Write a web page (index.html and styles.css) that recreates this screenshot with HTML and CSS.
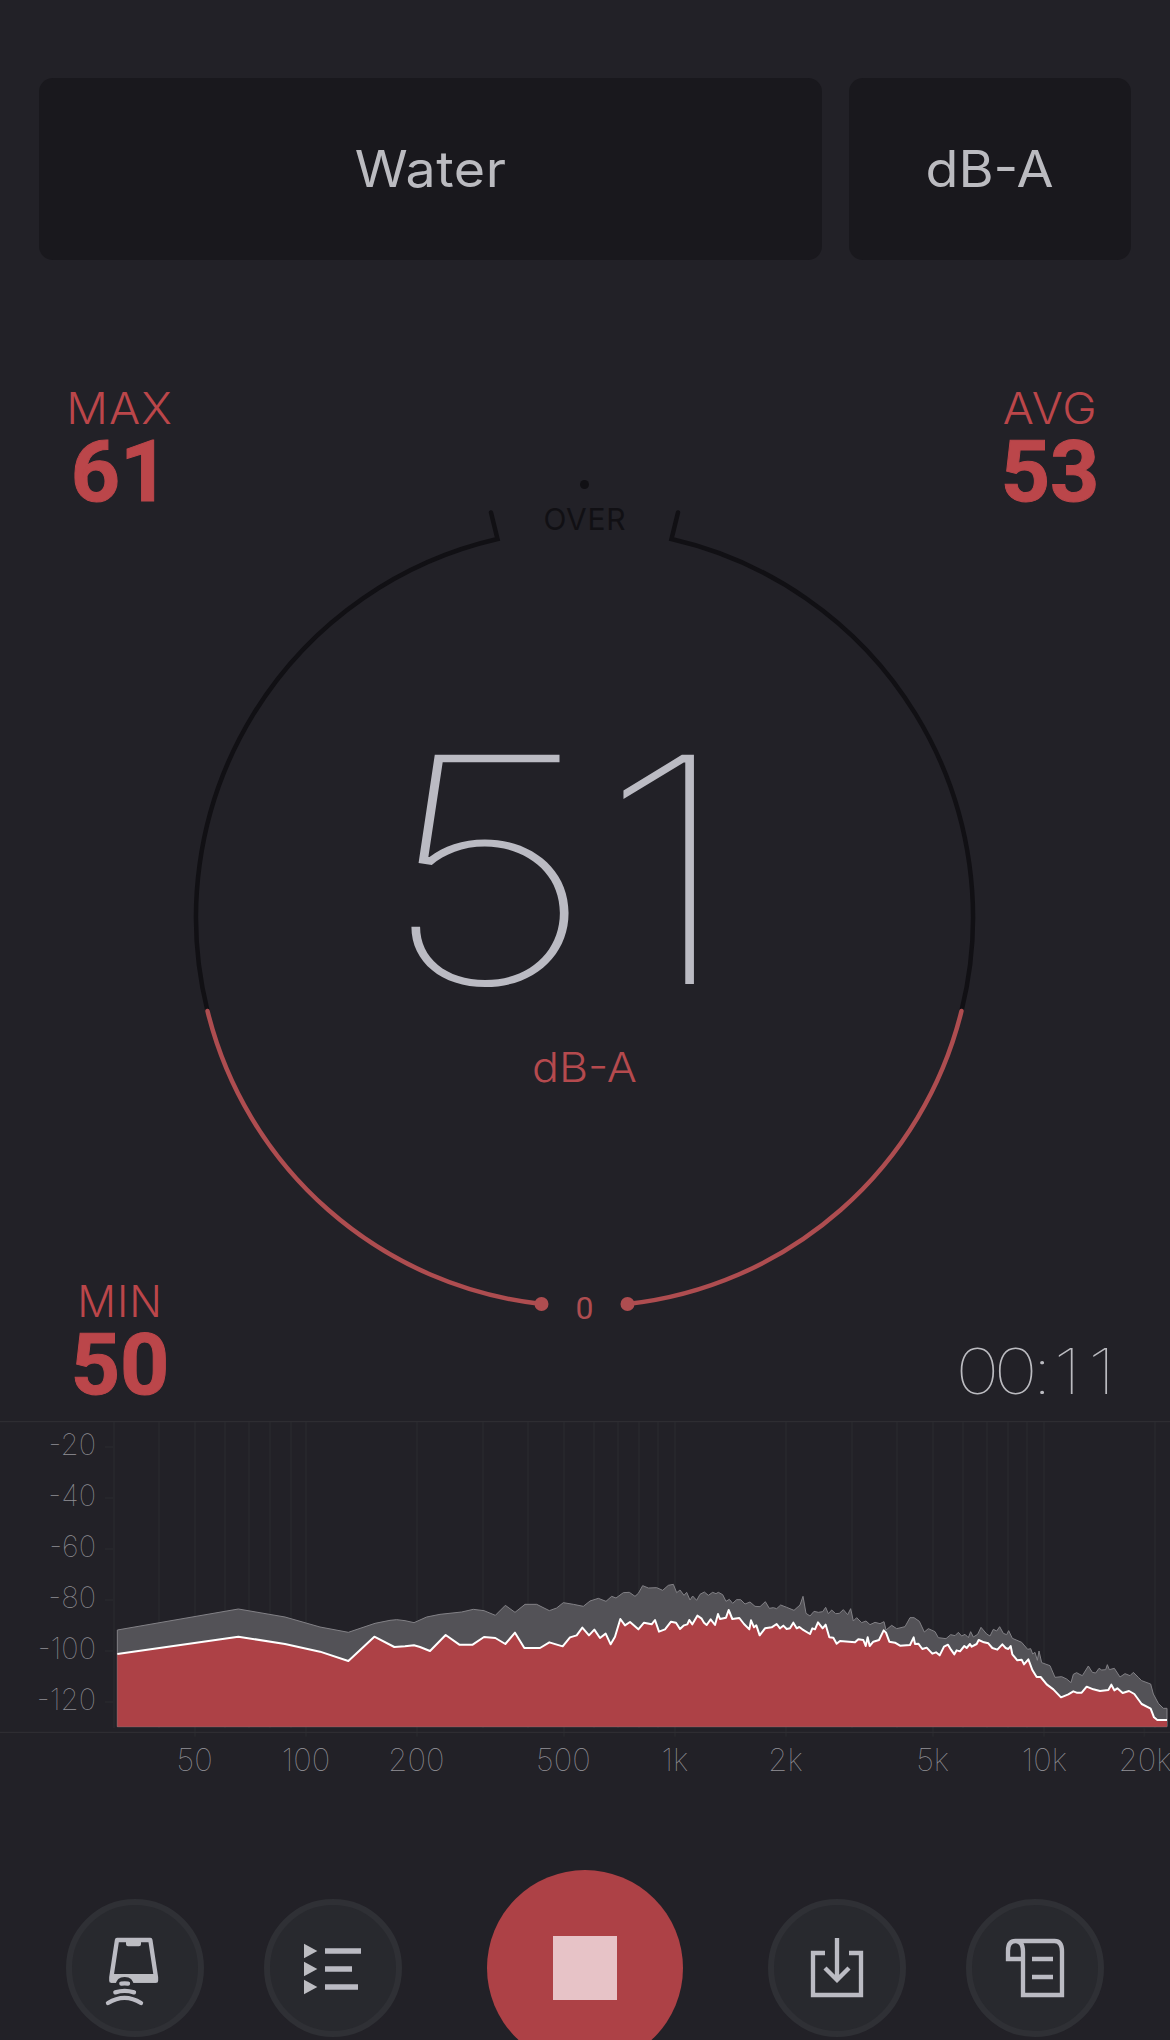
FILE: index.html
```html
<!DOCTYPE html>
<html lang="en">
<head>
<meta charset="utf-8">
<title>Sound level meter</title>
<link rel="stylesheet" href="styles.css">
</head>
<body>
<main class="app">
  <header class="modes">
    <button class="mode mode-preset"><span class="wide">Water</span></button>
    <button class="mode mode-weight"><span class="wide">dB-A</span></button>
  </header>

  <section class="meter">
    <svg class="gauge" viewBox="0 260 1170 1161">
      <g class="gauge-track">
        <path d="M491 512.5 L497.5 539 A388 388 0 0 0 207.5 1011"/>
        <path d="M678 512.5 L671.5 539 A388 388 0 0 1 961.5 1011"/>
      </g>
      <circle class="over-dot" cx="584.5" cy="484.5" r="4.5"/>
      <text class="over-label" x="543.5" y="529.5" textLength="82">OVER</text>
      <g class="gauge-level">
        <path d="M207.5 1011 A388 388 0 0 0 541.5 1304"/>
        <path d="M961.5 1011 A388 388 0 0 1 627.5 1304"/>
      </g>
      <circle class="level-end" cx="541.5" cy="1304" r="7"/>
      <circle class="level-end" cx="627.5" cy="1304" r="7"/>
      <text class="zero-label" x="584.5" y="1319">0</text>
      <text class="reading" transform="scale(1.225 1)" x="309.4 486.5" y="984">51</text>
      <text class="unit" x="532" y="1082" textLength="105" lengthAdjust="spacingAndGlyphs">dB-A</text>
    </svg>
    <div class="stat stat-max"><span class="stat-name wide">MAX</span><span class="stat-value">61</span></div>
    <div class="stat stat-avg"><span class="stat-name wide">AVG</span><span class="stat-value">53</span></div>
    <div class="stat stat-min"><span class="stat-name">MIN</span><span class="stat-value">50</span></div>
    <time class="timer">00:<span class="seconds">11</span></time>
  </section>

  <svg class="spectrum" viewBox="0 33 3510 1107">
    <path class="grid" d="M342 36V955M477 36V955M585 36V980M675 36V955M747 36V955M810 36V955M873 36V955M918 36V980M1251 36V980M1449 36V955M1584 36V955M1692 36V980M1782 36V955M1854 36V955M1917 36V955M1974 36V955M2025 36V980M2358 36V980M2556 36V955M2691 36V955M2799 36V980M2889 36V955M2961 36V955M3024 36V955M3081 36V955M3132 36V980M3465 36V955M3433 955V980M315 111H342M315 264H342M315 417H342M315 570H342M315 723H342M315 876H342"/>
    <path class="frame" d="M0 35H3510M0 967H3510"/>
    <path class="peak" d="M352 950V660L715 597 855 621 960 651 1045 667 1125 640 1170 631 1190 629 1215 632 1242 638 1280 621 1320 613 1385 606 1420 598 1452 602 1486 616 1516 586 1545 607 1575 583 1610 583 1648 602 1670 594 1690 578 1720 583 1750 589 1770 573 1795 565 1818 574 1835 559 1848 564 1870 548 1888 547 1905 559 1915 550 1928 527 1945 534 1970 533 1988 541 2005 526 2020 523 2030 548 2040 540 2052 556 2060 547 2070 570 2078 558 2090 571 2100 553 2113 546 2125 556 2138 547 2148 551 2155 547 2168 554 2178 574 2188 568 2198 580 2210 569 2222 569 2235 582 2250 576 2265 589 2280 590 2296 575 2308 595 2320 593 2330 596 2342 585 2360 592 2382 601 2400 585 2409 559 2418 610 2430 618 2442 604 2455 607 2468 605 2477 592 2485 611 2495 600 2507 611 2518 610 2530 599 2543 614 2552 596 2560 633 2570 623 2585 638 2598 633 2610 644 2625 637 2640 641 2652 635 2658 660 2675 646 2690 656 2715 650 2730 623 2742 623 2758 634 2773 666 2785 656 2805 665 2815 683 2838 686 2852 674 2865 677 2875 667 2885 678 2895 673 2905 683 2912 665 2920 681 2933 673 2943 652 2960 672 2970 678 2980 658 2990 663 2999 650 3010 670 3020 674 3026 662 3037 685 3065 697 3083 718 3092 716 3098 732 3105 727 3112 751 3117 723 3125 758 3150 767 3165 802 3185 800 3200 807 3213 818 3220 793 3230 788 3237 792 3247 797 3265 768 3277 787 3287 789 3297 775 3305 780 3317 779 3322 764 3328 779 3343 775 3360 801 3375 791 3390 797 3400 787 3415 802 3425 812 3452 822 3460 852 3475 880 3490 895H3501V950Z"/>
    <path class="live" d="M352 950V732L715 680 855 702 960 725 1045 753 1123 680 1183 711 1215 709 1242 706 1260 711 1290 723 1337 675 1378 704 1418 704 1452 681 1486 684 1516 702 1545 668 1573 714 1620 714 1648 697 1688 709 1710 682 1730 676 1747 653 1767 676 1783 659 1800 684 1817 671 1832 703 1845 680 1861 627 1875 646 1890 636 1915 658 1932 638 1955 643 1965 630 1977 665 1995 658 2013 635 2028 638 2040 657 2052 646 2062 643 2068 630 2077 643 2092 617 2105 626 2112 638 2120 645 2132 628 2145 645 2154 612 2160 627 2178 623 2186 600 2197 627 2218 624 2232 642 2248 658 2253 631 2262 652 2269 646 2279 676 2295 655 2315 652 2330 642 2340 655 2350 647 2360 657 2370 655 2380 638 2390 655 2398 651 2407 658 2430 672 2437 655 2445 658 2454 637 2468 655 2477 644 2488 682 2500 683 2510 701 2520 693 2565 697 2575 688 2590 690 2597 708 2603 682 2609 708 2620 695 2637 690 2651 661 2658 668 2668 695 2685 698 2700 707 2730 705 2741 682 2745 702 2755 701 2767 717 2780 713 2797 731 2808 727 2819 736 2832 710 2844 704 2853 719 2863 733 2870 721 2880 724 2893 708 2900 714 2910 702 2915 710 2930 702 2936 690 2952 697 2965 700 2977 714 2992 719 3007 703 3017 714 3025 717 3032 708 3037 733 3052 751 3065 749 3072 763 3085 748 3097 780 3110 801 3122 801 3140 823 3160 838 3183 862 3205 853 3220 844 3230 848 3245 848 3260 830 3280 838 3300 843 3325 840 3334 824 3343 841 3352 835 3368 849 3387 843 3403 852 3425 882 3452 896 3462 922 3472 930H3501V950Z"/>
    <path class="live-line" d="M352 732L715 680 855 702 960 725 1045 753 1123 680 1183 711 1215 709 1242 706 1260 711 1290 723 1337 675 1378 704 1418 704 1452 681 1486 684 1516 702 1545 668 1573 714 1620 714 1648 697 1688 709 1710 682 1730 676 1747 653 1767 676 1783 659 1800 684 1817 671 1832 703 1845 680 1861 627 1875 646 1890 636 1915 658 1932 638 1955 643 1965 630 1977 665 1995 658 2013 635 2028 638 2040 657 2052 646 2062 643 2068 630 2077 643 2092 617 2105 626 2112 638 2120 645 2132 628 2145 645 2154 612 2160 627 2178 623 2186 600 2197 627 2218 624 2232 642 2248 658 2253 631 2262 652 2269 646 2279 676 2295 655 2315 652 2330 642 2340 655 2350 647 2360 657 2370 655 2380 638 2390 655 2398 651 2407 658 2430 672 2437 655 2445 658 2454 637 2468 655 2477 644 2488 682 2500 683 2510 701 2520 693 2565 697 2575 688 2590 690 2597 708 2603 682 2609 708 2620 695 2637 690 2651 661 2658 668 2668 695 2685 698 2700 707 2730 705 2741 682 2745 702 2755 701 2767 717 2780 713 2797 731 2808 727 2819 736 2832 710 2844 704 2853 719 2863 733 2870 721 2880 724 2893 708 2900 714 2910 702 2915 710 2930 702 2936 690 2952 697 2965 700 2977 714 2992 719 3007 703 3017 714 3025 717 3032 708 3037 733 3052 751 3065 749 3072 763 3085 748 3097 780 3110 801 3122 801 3140 823 3160 838 3183 862 3205 853 3220 844 3230 848 3245 848 3260 830 3280 838 3300 843 3325 840 3334 824 3343 841 3352 835 3368 849 3387 843 3403 852 3425 882 3452 896 3462 922 3472 930H3501"/>
    <g class="level-scale">
      <text x="288" y="135">-20</text>
      <text x="288" y="288">-40</text>
      <text x="288" y="441">-60</text>
      <text x="288" y="594">-80</text>
      <text x="288" y="747">-100</text>
      <text x="288" y="900">-120</text>
    </g>
    <g class="freq-scale">
      <text x="584" y="1082">50</text>
      <text x="918" y="1082">100</text>
      <text x="1249" y="1082">200</text>
      <text x="1690" y="1082">500</text>
      <text x="2025" y="1082">1k</text>
      <text x="2356" y="1082">2k</text>
      <text x="2798" y="1082">5k</text>
      <text x="3133" y="1082">10k</text>
      <text x="3435" y="1082">20k</text>
    </g>
  </svg>

  <nav class="toolbar">
    <button class="tool" aria-label="Calibrate">
      <svg viewBox="96 135 378 378">
        <path class="stroke" stroke-linejoin="round" d="M231 240H331L348 352V362H214V352Z"/>
        <path class="fill" d="M258 240H303V253Q303 259 297 259H264Q258 259 258 253ZM213 342H349V368H213Z"/>
        <path class="gap" d="M227 376Q229 351 254 351Q279 351 281 376Z"/>
        <path class="stroke" stroke-linecap="round" d="M244 371Q254 369 264 371M226 397Q254 388 282 397M204 429Q254 398 303 429"/>
      </svg>
    </button>
    <button class="tool" aria-label="Sessions">
      <svg viewBox="690 135 378 378">
        <path class="arrow" d="M792 251L832 273 792 295ZM792 305L832 327 792 349ZM792 359L832 381 792 403Z"/>
        <path class="stroke bars" d="M855 273H963M855 327H936M855 381H954"/>
      </svg>
    </button>
    <button class="record" aria-label="Stop"><span class="stop"></span></button>
    <button class="tool" aria-label="Save">
      <svg viewBox="102 135 378 378">
        <path class="stroke" d="M255 279H219V405H363V279H327M291 234V358M255 324L291 360 327 324"/>
      </svg>
    </button>
    <button class="tool" aria-label="Log">
      <svg viewBox="696 135 378 378">
        <path class="stroke" d="M849 297H804V272Q804 243 826 243Q849 243 849 275V405H966V275Q966 243 944 243H826M876 297H939M876 351H939"/>
      </svg>
    </button>
  </nav>
</main>
</body>
</html>
```
FILE: styles.css
```css
* { box-sizing: border-box; }

body {
  margin: 0;
  background: #222127;
  color: #bbbbc0;
  font-family: Inter, "Liberation Sans", sans-serif;
}

button {
  margin: 0;
  padding: 0;
  border: 0;
  color: inherit;
  font: inherit;
}

svg { display: block; }

.app {
  width: 1170px;
  height: 2040px;
  overflow: hidden;
  display: flex;
  flex-direction: column;
}
.app > * { flex: none; }

.wide { display: inline-block; transform: scaleX(1.075); }

.modes {
  display: flex;
  gap: 27px;
  padding: 78px 39px 0;
  height: 260px;
}

.mode {
  border-radius: 14px;
  background: #19181d;
  font-size: 50px;
  font-weight: 370;
  line-height: 182px;
}
.mode-preset { flex: 1; letter-spacing: 0.5px; }
.mode-weight { width: 282px; }

.meter {
  height: 1161px;
  display: grid;
  grid-template: 1fr 1fr / 1fr 1fr;
}

.gauge { grid-area: 1 / 1 / 3 / 3; width: 1170px; height: 1161px; }
.gauge-track path { fill: none; stroke: #111014; stroke-width: 4.5; stroke-linecap: round; }
.gauge-level path { fill: none; stroke: #ae4d50; stroke-width: 4.5; stroke-linecap: round; }
.over-dot, .over-label { fill: #111014; }
.over-label { font-size: 30px; }
.level-end { fill: #ae4d50; }
.zero-label { fill: #ae4d50; font-family: Roboto, sans-serif; font-size: 32px; text-anchor: middle; }
.reading { fill: #bbbbc3; font-size: 315px; font-weight: 100; }
.unit { fill: #b54a4e; font-size: 41px; font-weight: 350; }

.stat {
  display: flex;
  flex-direction: column;
  align-items: center;
  gap: 2px;
  width: 160px;
  margin: 0 40px;
  color: #bb464a;
}
.stat-max { grid-area: 1 / 1; margin-top: 128px; }
.stat-avg { grid-area: 1 / 2; margin-top: 128px; justify-self: end; }
.stat-min { grid-area: 2 / 1; align-self: end; margin-bottom: 17px; }
.stat-name { font-size: 43px; font-weight: 300; line-height: 40px; letter-spacing: 1px; }
.stat-value {
  font-family: Roboto, "Liberation Sans", sans-serif;
  font-size: 86px;
  font-weight: 700;
  line-height: 83px;
  margin-bottom: -2px;
  -webkit-text-stroke: 1px #bb464a;
}

.timer {
  grid-area: 2 / 2;
  place-self: end;
  margin: 0 47px 18px 0;
  font-size: 63px;
  font-weight: 100;
  line-height: 64px;
  letter-spacing: -5px;
  transform: scaleX(1.19);
  transform-origin: right;
}
.seconds { letter-spacing: 6px; margin-left: 6px; }

.spectrum { width: 1170px; height: 369px; }
.grid { fill: none; stroke: #26262b; stroke-width: 6; }
.frame { fill: none; stroke: #2e2d32; stroke-width: 4; }
.peak { fill: #535257; stroke: #828186; stroke-width: 3; }
.live { fill: #ad4146; }
.live-line { fill: none; stroke: #fff; stroke-width: 6; stroke-linejoin: round; }
.level-scale, .freq-scale { fill: #929197; font-weight: 100; }
.level-scale { font-size: 88px; text-anchor: end; }
.freq-scale { font-size: 94px; text-anchor: middle; }

.toolbar {
  display: flex;
  justify-content: center;
  align-items: center;
  height: 196px;
  margin-top: 80px;
}
.tool {
  width: 138px;
  height: 138px;
  margin: 0 30px;
  border: 6px solid #2f3035;
  border-radius: 50%;
  background: #28292e;
}
.tool svg { width: 126px; height: 126px; }
.stroke { fill: none; stroke: #bbbbc3; stroke-width: 13; }
.bars { stroke-width: 16; }
.tool .fill, .arrow { fill: #bdbdc2; }
.tool .gap { fill: #28292e; }

.record {
  display: grid;
  place-items: center;
  width: 196px;
  height: 196px;
  margin: 0 55px;
  border-radius: 50%;
  background: #ad4146;
}
.stop { width: 64px; height: 64px; background: #e7c3c7; }
```
